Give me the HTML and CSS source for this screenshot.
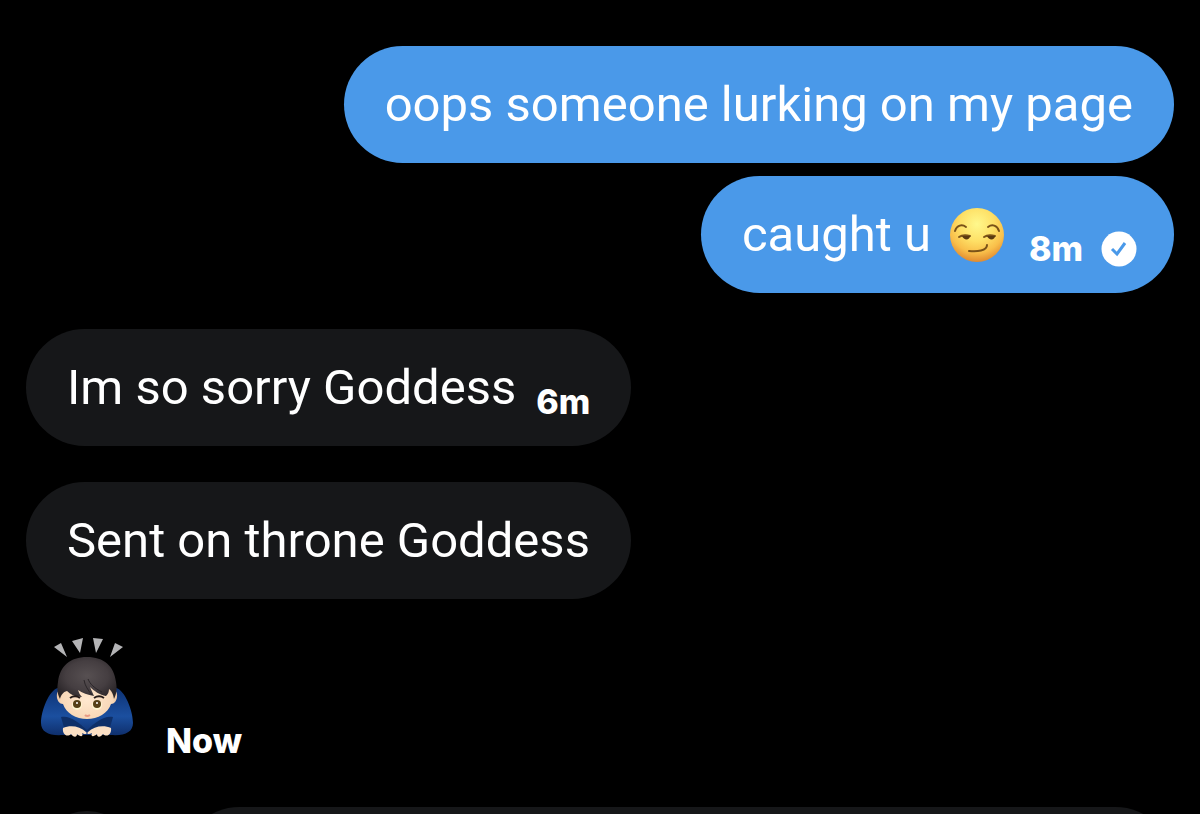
FILE: index.html
```html
<!DOCTYPE html>
<html lang="en">
<head>
    <meta charset="UTF-8">
    <meta name="viewport" content="width=device-width, initial-scale=1.0">
    <title>Messages</title>
    <link rel="stylesheet" href="styles.css">
</head>
<body>
    <main class="chat">
        <div class="message sent">
            <p class="text">oops someone lurking on my page</p>
        </div>
        <div class="message sent last">
            <p class="text">caught u</p>
            <svg class="emoji" viewBox="0 0 56 56" role="img" aria-label="Smirking face">
                <defs>
                    <radialGradient id="face" cx="50%" cy="30%" r="70%">
                        <stop offset="0" stop-color="#fff88c"/>
                        <stop offset="0.45" stop-color="#fee066"/>
                        <stop offset="0.75" stop-color="#f9bf4a"/>
                        <stop offset="1" stop-color="#e08a30"/>
                    </radialGradient>
                </defs>
                <circle cx="28" cy="28" r="27" fill="url(#face)"/>
                <g fill="none" stroke="#7a5218" stroke-width="2" stroke-linecap="round">
                    <path d="M6 24c2-6 7-7 11-4"/>
                    <path d="M39 20c4-3 9-2 11 4"/>
                    <path d="M10 30c3-2 7-2 11-1"/>
                    <path d="M35 30c3-2 7-2 11-1"/>
                    <path d="M20 44c8 .8 18 0 18-6"/>
                </g>
                <path d="M13 29h8c0 4-6 5-8 0zM38 29h8c0 4-6 5-8 0z" fill="#5b3a10"/>
            </svg>
            <span class="time">8m</span>
            <svg class="check" viewBox="0 0 36 36" role="img" aria-label="Sent">
                <circle cx="18" cy="18" r="17.500" fill="#fff"/>
                <path d="M11 18l5 5 8-11" fill="none" stroke="#4a99e9" stroke-width="3"/>
            </svg>
        </div>
        <div class="message received last">
            <p class="text">Im so sorry Goddess</p>
            <span class="time">6m</span>
        </div>
        <div class="message received last">
            <p class="text">Sent on throne Goddess</p>
        </div>
        <div class="reaction">
            <svg class="bowing" viewBox="0 0 96 104" role="img" aria-label="Person bowing">
                <defs>
                    <linearGradient id="sleeve" x1="0" y1="0" x2="0" y2="1">
                        <stop offset="0" stop-color="#0d3274"/>
                        <stop offset="0.6" stop-color="#1b4f9f"/>
                        <stop offset="1" stop-color="#0f2f6c"/>
                    </linearGradient>
                    <radialGradient id="hair" cx="50%" cy="45%" r="60%">
                        <stop offset="0" stop-color="#575052"/>
                        <stop offset="0.6" stop-color="#453e41"/>
                        <stop offset="1" stop-color="#2a2528"/>
                    </radialGradient>
                    <radialGradient id="skin" cx="50%" cy="55%" r="60%">
                        <stop offset="0" stop-color="#ffe8cf"/>
                        <stop offset="0.7" stop-color="#f8d8b8"/>
                        <stop offset="1" stop-color="#dcae89"/>
                    </radialGradient>
                </defs>
                <path d="M14 10l7-4 6 14zM32 4l11-3-3 15zM53 1l10 1-7 14zM75 6l8 4-13 10z" fill="#b4b4b6"/>
                <path d="M18 51C9 53 1 74 1 86c0 9 8 13 22 12h48c14 1 22-3 22-12 0-12-8-33-17-35z" fill="url(#sleeve)"/>
                <path d="M21 80c9-2 18 6 26 13 8-7 17-15 26-13l-4 14H25z" fill="#0e2f68"/>
                <path d="M20 53c-5 1-4 14 3 14 3 9 13 15 24 15s21-6 24-15c7 0 8-13 3-14V40H20z" fill="url(#skin)"/>
                <path d="M20 62c-3-6-3-11-2-17 2-16 12-25 29-25s27 9 29 25c1 6 1 11-2 17-1-5-2-8-5-10 0 3-1 5-3 7-6-1-12-5-16-9l4 9c-6-1-12-3-16-6 1 3 2 5 4 7-7 0-12-3-15-6-4 1-6 4-7 8z" fill="url(#hair)"/>
                <path d="M48 42c2 5 6 9 14 13M44 43c1 6 4 10 8 15" fill="none" stroke="#2a2528" stroke-width="1"/>
                <path d="M30 61c3-2 7-2 10 0M54 61c3-2 7-2 10 0" fill="none" stroke="#241a18" stroke-width="2"/>
                <circle cx="37" cy="68" r="5" fill="#fff6cf"/>
                <circle cx="57" cy="68" r="5" fill="#fff6cf"/>
                <circle cx="37" cy="67" r="4" fill="#564016"/>
                <circle cx="57" cy="67" r="4" fill="#564016"/>
                <circle cx="37" cy="66" r="1" fill="#fff"/>
                <circle cx="57" cy="66" r="1" fill="#fff"/>
                <path d="M45 78q2 2 5 0" fill="none" stroke="#e79a85" stroke-width="2"/>
                <path d="M23 91c7-3 17-2 23 4 2 2-1 3-4 1 2 4-2 4-5 1 0 4-4 3-6 0-4 4-9 0-8-6zM71 91c-7-3-17-2-23 4-2 2 1 3 4 1-2 4 2 4 5 1 0 4 4 3 6 0 4 4 9 0 8-6z" fill="#fbdfc3"/>
            </svg>
            <span class="time">Now</span>
        </div>
        <form class="composer">
            <button class="attach" type="button" aria-label="Add media"></button>
            <input class="field" type="text" aria-label="Message">
        </form>
    </main>
</body>
</html>
```
FILE: styles.css
```css
* {
    box-sizing: border-box;
}

body {
    margin: 0;
    background-color: #000;
    color: #fff;
    font-family: 'Roboto', 'Liberation Sans', sans-serif;
}

.chat {
    display: flex;
    flex-direction: column;
    height: 100vh;
    overflow: hidden;
    padding: 46px 26px 0;
}

.message {
    display: flex;
    align-items: center;
    flex-shrink: 0;
    min-height: 117px;
    margin-bottom: 13px;
    padding: 0 41px;
    border-radius: 59px;
}

.sent {
    align-self: flex-end;
    background-color: #4a99e9;
}

.received {
    align-self: flex-start;
    background-color: #161719;
}

.last {
    margin-bottom: 36px;
}

.text {
    margin: 0;
    font-size: 49px;
    line-height: 60px;
}

.time {
    font-family: 'Inter', 'Liberation Sans', sans-serif;
    font-size: 34px;
    font-weight: 800;
    line-height: 40px;
}

.message .time {
    margin: 28px 0 0 20px;
}

.emoji {
    width: 56px;
    height: 56px;
    margin-left: 18px;
}

.sent .emoji + .time {
    margin-left: 24px;
}

.check {
    width: 36px;
    height: 36px;
    margin: 28px -4px 0 18px;
}

.reaction {
    display: flex;
    flex-shrink: 0;
    align-items: flex-end;
    gap: 30px;
    height: 126px;
    padding: 2px 0 0 14px;
}

.bowing {
    width: 96px;
    height: 104px;
    align-self: flex-start;
}

.composer {
    display: flex;
    flex-shrink: 0;
    align-items: flex-start;
    gap: 44px;
    margin-top: 46px;
    padding-left: 11px;
}

.attach {
    width: 100px;
    height: 100px;
    margin-top: 4px;
    border: none;
    border-radius: 50%;
    background-color: #161719;
}

.field {
    flex: 1;
    height: 117px;
    padding: 0 41px;
    border: none;
    border-radius: 59px;
    background-color: #161719;
    color: #fff;
    font: inherit;
    font-size: 49px;
}
```
